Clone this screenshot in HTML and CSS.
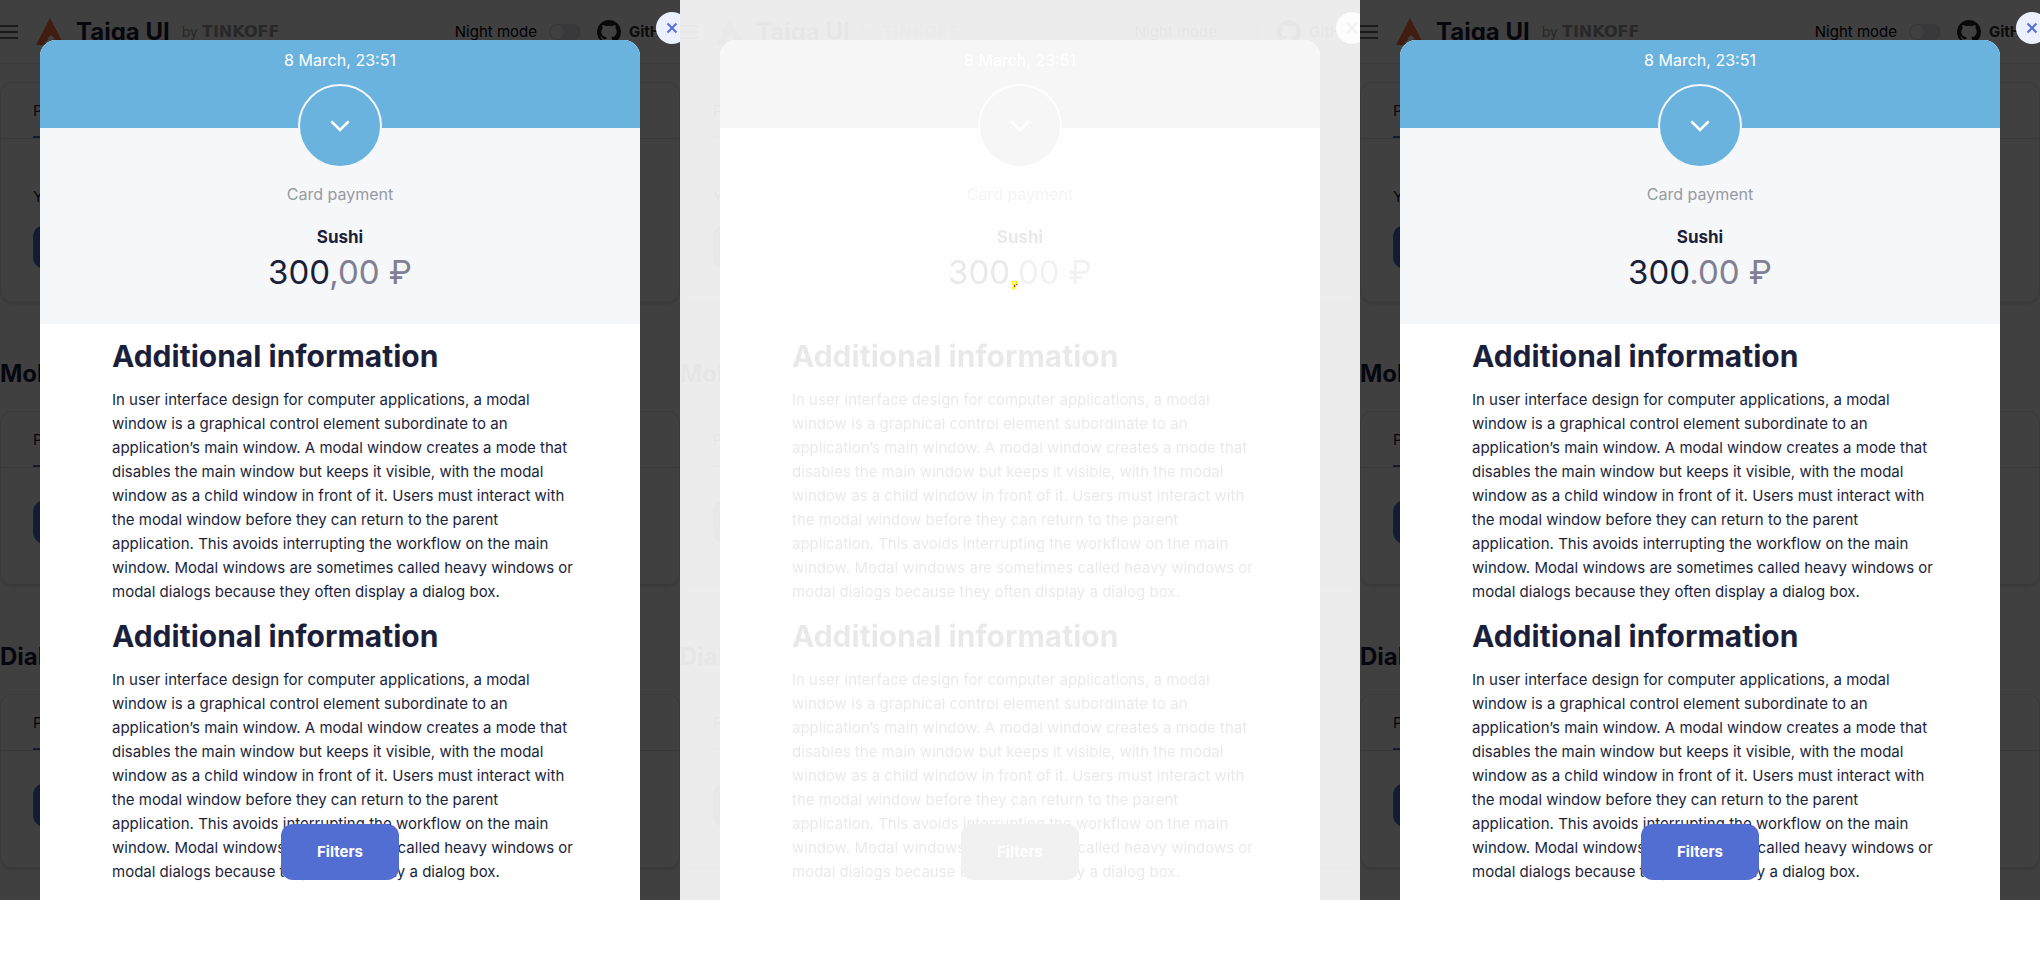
FILE: index.html
```
<!DOCTYPE html>
<html lang="en">
<head>
<meta charset="utf-8">
<title>Taiga UI dialogs</title>
<link rel="stylesheet" href="styles.css">
</head>
<body>
<svg class="sprite" aria-hidden="true">
  <symbol id="menu" viewBox="0 0 18 14"><path d="M0 1h18M0 7h18M0 13h18" stroke="currentColor" stroke-width="2"/></symbol>
  <symbol id="logo" viewBox="0 0 28 28"><path d="M14 0 28 27H0Z" fill="#ff7043"/><path d="M15 17l4 4-2 .5 3 3.500H8l5-4-2-.5Z" fill="#fff"/></symbol>
  <symbol id="github" viewBox="0 0 16 16"><path fill="currentColor" d="M8 0C3.580 0 0 3.580 0 8c0 3.540 2.290 6.530 5.470 7.590.4.070.55-.17.55-.38 0-.19-.01-.82-.01-1.490-2.010.37-2.530-.49-2.690-.94-.09-.23-.48-.94-.82-1.130-.28-.15-.68-.52-.01-.53.63-.01 1.080.58 1.230.82.720 1.210 1.870.87 2.330.66.070-.52.280-.87.510-1.070-1.780-.2-3.640-.89-3.640-3.950 0-.87.310-1.590.82-2.150-.08-.2-.36-1.020.08-2.120 0 0 .67-.21 2.200.82.640-.18 1.320-.27 2-.27s1.360.09 2 .27c1.530-1.040 2.200-.82 2.200-.82.440 1.100.160 1.920.080 2.120.510.560.820 1.270.820 2.150 0 3.070-1.870 3.750-3.650 3.950.290.250.540.730.540 1.480 0 1.070-.01 1.930-.01 2.200 0 .21.150.46.550.38A8.010 8.010 0 0 0 16 8c0-4.420-3.580-8-8-8Z"/></symbol>
  <symbol id="cross" viewBox="0 0 12 12"><path d="M1.500 1.500l9 9M10.500 1.500l-9 9" stroke="currentColor" stroke-width="2" fill="none"/></symbol>
  <symbol id="chevron" viewBox="0 0 20 12"><path d="M2 2l8 8 8-8" stroke="currentColor" stroke-width="2.500" fill="none" stroke-linecap="round"/></symbol>
</svg>
<main class="compare">
  <section class="shot">
    <div class="page">
      <header class="bar">
        <svg class="menu"><use href="#menu"/></svg>
        <svg class="logo"><use href="#logo"/></svg>
        <span class="brand">Taiga UI</span>
        <span class="by">by</span><span class="vendor">TINKOFF</span>
        <label class="night">Night mode <input class="switch" type="checkbox"></label>
        <a class="github" href="#"><svg><use href="#github"/></svg>GitHub</a>
      </header>
      <article class="card card-tall"><div class="tabs"><span class="tab">Preview</span></div><div class="body"><p class="note">You</p><span class="show"></span></div></article>
      <h2 class="title">Mobile</h2>
      <article class="card"><div class="tabs"><span class="tab">Preview</span></div><div class="body"><span class="show"></span></div></article>
      <h2 class="title">Dialog</h2>
      <article class="card"><div class="tabs"><span class="tab">Preview</span></div><div class="body"><span class="show"></span></div></article>
    </div>
    <button class="close" aria-label="Close"><svg><use href="#cross"/></svg></button>
    <div class="dialog" role="dialog">
      <div class="date">8 March, 23:51</div>
      <div class="summary">
        <span class="avatar"><svg><use href="#chevron"/></svg></span>
        <p class="kind">Card payment</p>
        <h3 class="name">Sushi</h3>
        <p class="money">300<span class="cents">,00 ₽</span></p>
      </div>
      <div class="info">
        <h2 class="heading">Additional information</h2>
        <p class="text">In user interface design for computer applications, a modal<br>window is a graphical control element subordinate to an<br>application’s main window. A modal window creates a mode that<br>disables the main window but keeps it visible, with the modal<br>window as a child window in front of it. Users must interact with<br>the modal window before they can return to the parent<br>application. This avoids interrupting the workflow on the main<br>window. Modal windows are sometimes called heavy windows or<br>modal dialogs because they often display a dialog box.</p>
        <h2 class="heading">Additional information</h2>
        <p class="text">In user interface design for computer applications, a modal<br>window is a graphical control element subordinate to an<br>application’s main window. A modal window creates a mode that<br>disables the main window but keeps it visible, with the modal<br>window as a child window in front of it. Users must interact with<br>the modal window before they can return to the parent<br>application. This avoids interrupting the workflow on the main<br>window. Modal windows are sometimes called heavy windows or<br>modal dialogs because they often display a dialog box.</p>
      </div>
      <button class="filters">Filters</button>
    </div>
  </section>
  <div class="diff">
  <section class="shot shot-faded">
    <div class="page">
      <header class="bar">
        <svg class="menu"><use href="#menu"/></svg>
        <svg class="logo"><use href="#logo"/></svg>
        <span class="brand">Taiga UI</span>
        <span class="by">by</span><span class="vendor">TINKOFF</span>
        <label class="night">Night mode <input class="switch" type="checkbox"></label>
        <a class="github" href="#"><svg><use href="#github"/></svg>GitHub</a>
      </header>
      <article class="card card-tall"><div class="tabs"><span class="tab">Preview</span></div><div class="body"><p class="note">You</p><span class="show"></span></div></article>
      <h2 class="title">Mobile</h2>
      <article class="card"><div class="tabs"><span class="tab">Preview</span></div><div class="body"><span class="show"></span></div></article>
      <h2 class="title">Dialog</h2>
      <article class="card"><div class="tabs"><span class="tab">Preview</span></div><div class="body"><span class="show"></span></div></article>
    </div>
    <button class="close" aria-label="Close"><svg><use href="#cross"/></svg></button>
    <div class="dialog" role="dialog">
      <div class="date">8 March, 23:51</div>
      <div class="summary">
        <span class="avatar"><svg><use href="#chevron"/></svg></span>
        <p class="kind">Card payment</p>
        <h3 class="name">Sushi</h3>
        <p class="money">300<span class="cents">,00 ₽</span></p>
      </div>
      <div class="info">
        <h2 class="heading">Additional information</h2>
        <p class="text">In user interface design for computer applications, a modal<br>window is a graphical control element subordinate to an<br>application’s main window. A modal window creates a mode that<br>disables the main window but keeps it visible, with the modal<br>window as a child window in front of it. Users must interact with<br>the modal window before they can return to the parent<br>application. This avoids interrupting the workflow on the main<br>window. Modal windows are sometimes called heavy windows or<br>modal dialogs because they often display a dialog box.</p>
        <h2 class="heading">Additional information</h2>
        <p class="text">In user interface design for computer applications, a modal<br>window is a graphical control element subordinate to an<br>application’s main window. A modal window creates a mode that<br>disables the main window but keeps it visible, with the modal<br>window as a child window in front of it. Users must interact with<br>the modal window before they can return to the parent<br>application. This avoids interrupting the workflow on the main<br>window. Modal windows are sometimes called heavy windows or<br>modal dialogs because they often display a dialog box.</p>
      </div>
      <button class="filters">Filters</button>
    </div>
  </section>
  <svg class="mark" viewBox="0 0 5 8" shape-rendering="crispEdges"><path d="M0 0h5v4H4v3H3v1H0V6h1V4H0Z" fill="#ff0"/><path d="M1 1h2v2H1Z" fill="#fff"/><path d="M2 4h1v2H2ZM4 3h1v1H4Z" fill="#e01000"/></svg>
  </div>
  <section class="shot">
    <div class="page">
      <header class="bar">
        <svg class="menu"><use href="#menu"/></svg>
        <svg class="logo"><use href="#logo"/></svg>
        <span class="brand">Taiga UI</span>
        <span class="by">by</span><span class="vendor">TINKOFF</span>
        <label class="night">Night mode <input class="switch" type="checkbox"></label>
        <a class="github" href="#"><svg><use href="#github"/></svg>GitHub</a>
      </header>
      <article class="card card-tall"><div class="tabs"><span class="tab">Preview</span></div><div class="body"><p class="note">You</p><span class="show"></span></div></article>
      <h2 class="title">Mobile</h2>
      <article class="card"><div class="tabs"><span class="tab">Preview</span></div><div class="body"><span class="show"></span></div></article>
      <h2 class="title">Dialog</h2>
      <article class="card"><div class="tabs"><span class="tab">Preview</span></div><div class="body"><span class="show"></span></div></article>
    </div>
    <button class="close" aria-label="Close"><svg><use href="#cross"/></svg></button>
    <div class="dialog" role="dialog">
      <div class="date">8 March, 23:51</div>
      <div class="summary">
        <span class="avatar"><svg><use href="#chevron"/></svg></span>
        <p class="kind">Card payment</p>
        <h3 class="name">Sushi</h3>
        <p class="money">300<span class="cents">.00 ₽</span></p>
      </div>
      <div class="info">
        <h2 class="heading">Additional information</h2>
        <p class="text">In user interface design for computer applications, a modal<br>window is a graphical control element subordinate to an<br>application’s main window. A modal window creates a mode that<br>disables the main window but keeps it visible, with the modal<br>window as a child window in front of it. Users must interact with<br>the modal window before they can return to the parent<br>application. This avoids interrupting the workflow on the main<br>window. Modal windows are sometimes called heavy windows or<br>modal dialogs because they often display a dialog box.</p>
        <h2 class="heading">Additional information</h2>
        <p class="text">In user interface design for computer applications, a modal<br>window is a graphical control element subordinate to an<br>application’s main window. A modal window creates a mode that<br>disables the main window but keeps it visible, with the modal<br>window as a child window in front of it. Users must interact with<br>the modal window before they can return to the parent<br>application. This avoids interrupting the workflow on the main<br>window. Modal windows are sometimes called heavy windows or<br>modal dialogs because they often display a dialog box.</p>
      </div>
      <button class="filters">Filters</button>
    </div>
  </section>
</main>
</body>
</html>
```

FILE: styles.css
```
* { box-sizing: border-box; }
body {
  margin: 0;
  background: #fff;
  color: #1b1f3b;
  font: 15px/24px Inter, "Open Sans", sans-serif;
}
h2, h3, p { margin: 0; }
button { border: 0; padding: 0; font: inherit; }
svg { display: block; }
.sprite { position: absolute; width: 0; height: 0; }

.compare { display: grid; grid-template-columns: repeat(3, minmax(0, 1fr)); }
.diff { position: relative; }
.shot { position: relative; overflow: hidden; padding: 40px 40px 0; }
.shot-faded { filter: grayscale(1) opacity(0.1); }
.mark { position: absolute; top: 281px; left: 50%; width: 5px; height: 8px; margin-left: -8px; }

/* Page under the dimmed backdrop */
.page { position: absolute; inset: 0; background: #fff; }
.page::after { content: ""; position: absolute; inset: 0; background: rgba(0, 0, 0, 0.75); }
.bar {
  display: flex;
  align-items: center;
  height: 64px;
  border-bottom: 1px solid #dfdfdf;
}
.menu { width: 18px; height: 14px; color: #666; }
.logo { width: 28px; height: 28px; margin: 0 12px 0 18px; }
.brand { font-size: 24px; font-weight: 700; }
.by { margin-left: 12px; color: #a0a0a0; font-size: 14px; }
.vendor { margin-left: 4px; color: #a0a0a0; font: 700 16px/24px "DejaVu Sans", sans-serif; }
.night { display: flex; align-items: center; margin-left: auto; color: #000; }
.switch {
  appearance: none;
  width: 32px;
  height: 16px;
  margin: 0 16px 0 12px;
  border-radius: 8px;
  background: radial-gradient(circle at 8px 8px, #fff 6px, #dde0ec 7px);
}
.github {
  display: flex;
  align-items: center;
  gap: 8px;
  width: 83px;
  color: #333;
  font-weight: 700;
  text-decoration: none;
}
.github svg { flex: none; width: 24px; height: 24px; color: #222; }
.card {
  height: 174px;
  border: 1px solid #e4e4e4;
  border-radius: 12px;
  box-shadow: 0 2px 3px rgba(0, 0, 0, 0.12);
}
.card-tall { height: 220px; margin-top: 18px; }
.tabs { display: flex; height: 56px; padding-left: 32px; border-bottom: 1px solid #dfdfdf; }
.tab { padding-top: 16px; border-bottom: 2px solid #526ed3; }
.body { padding: 32px; }
.card-tall .body { padding-top: 46px; }
.card-tall .note { margin-bottom: 16px; }
.show { display: block; width: 120px; height: 44px; border-radius: 12px; background: #526ed3; }
.title { padding: 54px 0 19px; font-size: 24px; line-height: 36px; }

/* Dialog */
.close {
  position: absolute;
  top: 12px;
  right: -8px;
  display: grid;
  place-items: center;
  width: 32px;
  height: 32px;
  border-radius: 50%;
  background: #ebefff;
  color: #526ed3;
}
.close svg { width: 12px; height: 12px; }
.dialog {
  position: relative;
  overflow: hidden;
  border-radius: 16px 16px 0 0;
  background: #fff;
}
.date {
  height: 88px;
  padding-top: 8px;
  background: #6ab3df;
  color: #fff;
  font-size: 16px;
  text-align: center;
}
.summary {
  display: flex;
  flex-direction: column;
  align-items: center;
  height: 196px;
  background: #f5f7f9;
}
.avatar {
  position: relative;
  display: grid;
  place-items: center;
  flex: none;
  width: 84px;
  height: 84px;
  margin-top: -44px;
  border: 2px solid #f5f7f9;
  border-radius: 50%;
  background: #6ab3df;
  color: #fff;
}
.avatar svg { width: 20px; height: 12px; }
.kind { margin-top: 14px; color: #959ba4; font-size: 16px; }
.name { margin-top: 19px; font-size: 17px; line-height: 24px; }
.money { font-size: 33px; line-height: 46px; }
.cents { color: #7f8093; }
.info { padding: 0 72px 16px; }
.heading { padding: 14px 0; font-size: 30px; line-height: 36px; white-space: nowrap; }
.text { white-space: nowrap; }
.filters {
  position: absolute;
  bottom: 20px;
  left: 50%;
  width: 118px;
  height: 56px;
  transform: translateX(-50%);
  border-radius: 12px;
  background: #526ed3;
  color: #fff;
  font-weight: 700;
}
```
